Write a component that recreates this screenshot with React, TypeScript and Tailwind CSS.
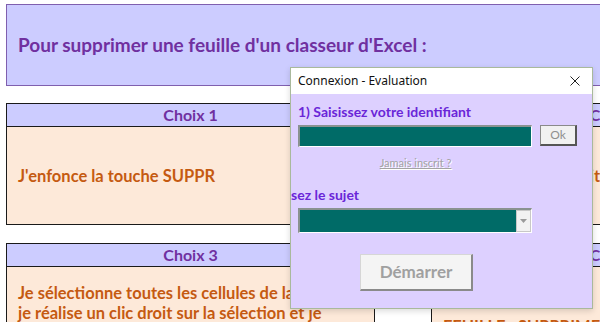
import React from "react";

const calibri = { fontFamily: "Lato, 'Liberation Sans', sans-serif" };

function ChoiceCell({
	title,
	width,
	bodyClass,
	children,
}: {
	title: string;
	width: string;
	bodyClass: string;
	children: React.ReactNode;
}): React.ReactNode {
	return (
		<div className={`flex shrink-0 flex-col border border-[#1a1a1a] ${width}`}>
			<div className="flex h-[23px] items-center justify-center border-b border-[#1a1a1a] bg-[#ccccff] text-[16px] font-bold text-[#7030a0]">
				{title}
			</div>
			<div className={`flex-1 bg-[#fde9d9] px-[11px] text-[16.5px] font-bold leading-[20px] text-[#c55a11] ${bodyClass}`}>
				{children}
			</div>
		</div>
	);
}

function ConnexionDialog(): React.ReactNode {
	return (
		<div className="absolute left-[290px] top-[67px] flex h-[242px] w-[303px] flex-col border border-[#a9b99c] shadow-[0_2px_6px_rgba(0,0,0,0.15)]">
			{/* Title bar */}
			<div className="flex h-[26px] items-center justify-between bg-white pl-[7px] pr-[11px]">
				<span className="text-[12px] text-[#111]" style={{ fontFamily: "'Noto Sans', sans-serif" }}>
					Connexion - Evaluation
				</span>
				<svg width="10" height="10" viewBox="0 0 10 10" className="mr-[1px]">
					<path d="M0.5 0.5 L9.5 9.5 M9.5 0.5 L0.5 9.5" stroke="#222" strokeWidth="1" fill="none" />
				</svg>
			</div>

			{/* Client area */}
			<div className="flex flex-1 flex-col bg-[#ddd0ff] px-[7px]" style={calibri}>
				<p className="mt-[8px] text-[14px] font-bold leading-[20px] text-[#6a26d8]">1) Saisissez votre identifiant</p>
				<div className="mt-[3px] flex items-start">
					<div className="h-[22px] w-[234px] border-b border-r border-l-2 border-t-2 border-b-white border-r-white border-l-[#8a9290] border-t-[#8a9290] bg-[#006b67]" />
					<button className="ml-[8px] flex h-[21px] w-[37px] items-center justify-center border border-[#8a8a8a] border-b-2 border-r-2 border-b-[#555] border-r-[#555] bg-[#f1f1f1] text-[12px] text-[#8f8f8f]">
						Ok
					</button>
				</div>
				<div className="mt-[9px] flex justify-center pr-[52px]">
					<span className="text-[11px] leading-[14px] text-[#a3a3a3] underline [text-shadow:1px_1px_0_#ffffff]">
						Jamais inscrit ?
					</span>
				</div>
				<p className="-ml-[7px] mt-[15px] text-[14px] font-bold leading-[20px] text-[#6a26d8]">sez le sujet</p>
				<div className="mt-[3px] flex h-[25px] w-[234px] border-b border-r border-l-2 border-t-2 border-b-white border-r-white border-l-[#8a9290] border-t-[#8a9290]">
					<div className="flex-1 bg-[#006b67]" />
					<div className="flex w-[15px] items-center justify-center border border-[#c8c8c8] bg-[#f2f2f2]">
						<svg width="7" height="4" viewBox="0 0 7 4">
							<path d="M0 0 L7 0 L3.5 4 Z" fill="#9a9a9a" />
						</svg>
					</div>
				</div>
				<div className="mt-[21px] flex pl-[62px]">
					<button className="flex h-[37px] w-[113px] items-center justify-center border border-[#d6d6d6] border-b-2 border-r-2 border-b-[#8a8a8a] border-r-[#8a8a8a] bg-[#f4f4f4] text-[17px] font-bold text-[#a0a0a0]">
						Démarrer
					</button>
				</div>
			</div>
		</div>
	);
}

export default function App(): React.ReactNode {
	return (
		<div className="relative h-[322px] w-[600px] overflow-hidden bg-white" style={calibri}>
			<div className="w-[820px] pl-[6px] pt-[4px]">
				{/* Question banner */}
				<div className="flex h-[82px] items-center border border-[#7f5fae] bg-[#ccccff] pl-[11px]">
					<h1 className="text-[19px] font-bold text-[#7030a0]">Pour supprimer une feuille d'un classeur d'Excel :</h1>
				</div>

				{/* Choix 1 & 2 */}
				<div className="mt-[17px] flex h-[122px] gap-[56px]">
					<ChoiceCell title="Choix 1" width="w-[369px]" bodyClass="flex items-center">
						J'enfonce la touche SUPPR
					</ChoiceCell>
					<ChoiceCell title="Choix 2" width="w-[372px]" bodyClass="flex items-center whitespace-nowrap">
						Je réalise un clic droit sur l'onglet de la feuille et je choisis Supprimer
					</ChoiceCell>
				</div>

				{/* Choix 3 & 4 */}
				<div className="mt-[18px] flex h-[130px] gap-[56px]">
					<ChoiceCell title="Choix 3" width="w-[369px]" bodyClass="pt-[16px] whitespace-nowrap">
						Je sélectionne toutes les cellules de la feuille,
						<br />
						je réalise un clic droit sur la sélection et je
					</ChoiceCell>
					<ChoiceCell title="Choix 4" width="w-[372px]" bodyClass="pt-[50px] whitespace-nowrap">
						FEUILLE : SUPPRIMER
					</ChoiceCell>
				</div>
			</div>

			<ConnexionDialog />
		</div>
	);
}
